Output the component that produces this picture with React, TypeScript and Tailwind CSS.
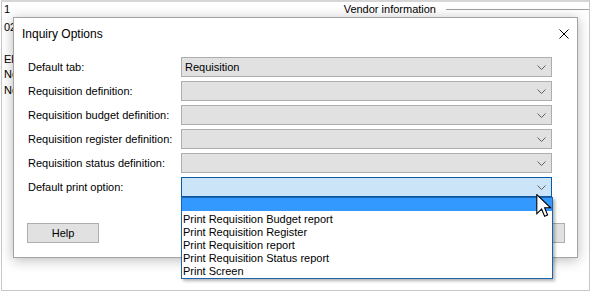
import { ReactNode } from 'react';

const font = "font-['Liberation_Sans',Arial,sans-serif]";

function Chevron() {
  return (
    <svg width="9" height="5" viewBox="0 0 9 5" className="shrink-0">
      <polyline points="0.5,0.5 4.5,4.5 8.5,0.5" fill="none" stroke="#606060" strokeWidth="1" />
    </svg>
  );
}

function Select({ value, open, children }: { value?: string; open?: boolean; children?: ReactNode }) {
  return (
    <div className="relative w-[371px] h-[20px]">
      <div
        className={
          open
            ? 'h-full flex items-center justify-between pl-[3px] pr-[5px] border border-[#0b5aa6] bg-[#cce4f7]'
            : 'h-full flex items-center justify-between pl-[3px] pr-[5px] border border-[#adadad] bg-[#e1e1e1]'
        }
      >
        <span className="leading-none">{value}</span>
        <Chevron />
      </div>
      {children}
    </div>
  );
}

const rows = [
  { label: 'Default tab:', value: 'Requisition' },
  { label: 'Requisition definition:' },
  { label: 'Requisition budget definition:' },
  { label: 'Requisition register definition:' },
  { label: 'Requisition status definition:' },
];

const options = [
  'Print Requisition Budget report',
  'Print Requisition Register',
  'Print Requisition report',
  'Print Requisition Status report',
  'Print Screen',
];

export default function App() {
  return (
    <div className={`relative w-[591px] h-[293px] bg-white overflow-hidden text-[11px] text-black ${font}`}>
      {/* page behind the dialog */}
      <div className="h-full pl-[1px] pr-[1px] pb-[2px]">
        <div className="h-full border-l border-r border-b border-t-2 border-[#c8c8c8] border-t-[#d6d6d6] flex flex-col">
          <div className="h-[15px] flex items-center">
            <span className="pl-[2px]">1</span>
            <div className="ml-auto flex items-center">
              <span>Vendor information</span>
              <div className="ml-[10px] w-[143px] h-px bg-[#a0a0a0]" />
            </div>
          </div>
          <div className="pl-[2px] mt-[2px] leading-[16px]">02</div>
          <div className="pl-[2px] mt-[16px] leading-[16px]">El</div>
          <div className="pl-[2px] leading-[15px]">Ne</div>
          <div className="pl-[2px] leading-[16px]">Ne</div>
        </div>
      </div>

      {/* dialog */}
      <div className="absolute left-[13px] top-[17px] w-[565px] h-[241px] bg-white border border-[#a3a3a3] shadow-[0_2px_12px_rgba(0,0,0,0.28)] flex flex-col">
        <div className="h-[31px] flex items-center justify-between pl-[8px] pr-[8px] text-[12px]">
          <span>Inquiry Options</span>
          <svg width="10" height="10" viewBox="0 0 10 10">
            <path d="M0.5 0.5 L9.5 9.5 M9.5 0.5 L0.5 9.5" stroke="#000" strokeWidth="1" />
          </svg>
        </div>

        <div className="flex flex-col gap-[4px] pt-[8px] pl-[14px]">
          {rows.map((r) => (
            <div key={r.label} className="flex items-center h-[20px]">
              <span className="w-[153px] pt-[1px]">{r.label}</span>
              <Select value={r.value} />
            </div>
          ))}
          <div className="flex items-center h-[20px]">
            <span className="w-[153px] pt-[1px]">Default print option:</span>
            <Select open>
              <div className="absolute left-0 top-[20px] w-[372px] z-20 bg-white border border-[#1a63ad] shadow-[2px_2px_3px_rgba(0,0,0,0.3)]">
                <div className="h-[13px] bg-[#3399ff]" />
                <div className="pt-[2px]">
                  {options.map((o) => (
                    <div key={o} className="h-[13px] leading-[13px] pl-[1px]">
                      {o}
                    </div>
                  ))}
                </div>
              </div>
            </Select>
          </div>
        </div>

        <div className="mt-[26px] flex justify-between pl-[13px] pr-[12px]">
          <button className="w-[72px] h-[20px] border border-[#adadad] bg-[#e1e1e1] text-[11px] leading-none">Help</button>
          <button className="w-[73px] h-[20px] border border-[#adadad] bg-[#e1e1e1] text-[11px] leading-none">Close</button>
        </div>
      </div>

      {/* mouse pointer */}
      <svg className="absolute left-[536px] top-[194px] z-30" width="16" height="24" viewBox="0 0 13 20">
        <path d="M0.5 0.5 V16.5 L4.5 12.5 L7 18.5 L9.5 17.5 L7 11.5 H12 Z" fill="#fff" stroke="#000" strokeWidth="0.9" strokeLinejoin="miter" />
      </svg>
    </div>
  );
}
